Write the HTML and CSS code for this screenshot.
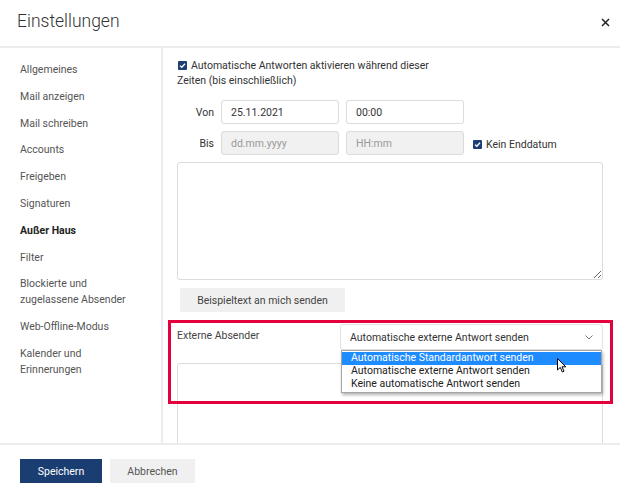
FILE: index.html
```html
<!DOCTYPE html>
<html lang="de">
<head>
<meta charset="utf-8">
<title>Einstellungen</title>
<link rel="stylesheet" href="styles.css">
</head>
<body>
<div class="dialog">
  <header class="header">
    <h1 class="title">Einstellungen</h1>
    <button class="close" aria-label="Schließen">
      <svg width="9" height="9" viewBox="0 0 9 9"><path d="M1 1 L8 8 M8 1 L1 8" stroke="#222" stroke-width="1.5" fill="none"/></svg>
    </button>
  </header>
  <div class="main">
    <nav class="sidebar">
      <div class="nav-item">Allgemeines</div>
      <div class="nav-item">Mail anzeigen</div>
      <div class="nav-item">Mail schreiben</div>
      <div class="nav-item">Accounts</div>
      <div class="nav-item">Freigeben</div>
      <div class="nav-item">Signaturen</div>
      <div class="nav-item active">Außer Haus</div>
      <div class="nav-item">Filter</div>
      <div class="nav-item">Blockierte und<br>zugelassene Absender</div>
      <div class="nav-item">Web-Offline-Modus</div>
      <div class="nav-item">Kalender und<br>Erinnerungen</div>
    </nav>
    <section class="content">
      <p class="autoreply"><span class="check"><svg width="9" height="9" viewBox="0 0 9 9"><path d="M2 4.6 L3.8 6.3 L7 2.8" stroke="#fff" stroke-width="1.3" fill="none"/></svg></span>Automatische Antworten aktivieren während dieser Zeiten (bis einschließlich)</p>
      <div class="daterow">
        <span class="datelabel">Von</span>
        <div class="field">25.11.2021</div>
        <div class="field">00:00</div>
      </div>
      <div class="daterow second">
        <span class="datelabel">Bis</span>
        <div class="field disabled">dd.mm.yyyy</div>
        <div class="field disabled">HH:mm</div>
        <span class="enddate"><span class="check"><svg width="9" height="9" viewBox="0 0 9 9"><path d="M2 4.6 L3.8 6.3 L7 2.8" stroke="#fff" stroke-width="1.3" fill="none"/></svg></span>Kein Enddatum</span>
      </div>
      <textarea class="message"></textarea>
      <button class="sample">Beispieltext an mich senden</button>
      <div class="external">
        <span class="ext-label">Externe Absender</span>
        <div class="select">
          <span>Automatische externe Antwort senden</span>
          <svg class="chevron" width="8" height="5" viewBox="0 0 8 5"><path d="M0.5 0.5 L4 4 L7.5 0.5" stroke="#777" stroke-width="1" fill="none"/></svg>
          <ul class="options">
            <li class="option selected">Automatische Standardantwort senden</li>
            <li class="option">Automatische externe Antwort senden</li>
            <li class="option">Keine automatische Antwort senden</li>
          </ul>
          <svg class="cursor" width="10" height="15" viewBox="0 0 10 15"><path d="M0.5 0.5 L0.5 12 L3.3 9.4 L5.3 14 L7 13.2 L5 8.8 L8.8 8.8 Z" fill="#fff" stroke="#000" stroke-width="1"/></svg>
        </div>
      </div>
      <textarea class="message external-message"></textarea>
      <div class="highlight"></div>
    </section>
  </div>
  <footer class="footer">
    <button class="btn primary">Speichern</button>
    <button class="btn secondary">Abbrechen</button>
  </footer>
</div>
</body>
</html>
```
FILE: styles.css
```css
* { box-sizing: border-box; }
html, body { margin: 0; padding: 0; }
body {
  font-family: Roboto, "Noto Sans", "Liberation Sans", sans-serif;
  font-size: 10.5px;
  color: #333;
  background: #fff;
  overflow: hidden;
}
.dialog {
  width: 620px;
  height: 493px;
  display: flex;
  flex-direction: column;
}
.header {
  height: 48px;
  flex: none;
  border-bottom: 2px solid #ececec;
  display: flex;
  align-items: center;
  justify-content: space-between;
  padding: 0 9px 4px 17px;
}
.title {
  margin: 0;
  font-size: 17.5px;
  font-weight: 300;
  color: #333;
}
.close {
  border: 0;
  background: none;
  padding: 0;
  width: 12px;
  height: 12px;
  display: flex;
  align-items: center;
  justify-content: center;
  margin-top: 3px;
}
.main {
  flex: none;
  height: 397px;
  display: flex;
  border-bottom: 2px solid #ececec;
}
.sidebar {
  width: 163px;
  flex: none;
  border-right: 2px solid #ececec;
  padding: 14px 0 0 20px;
}
.nav-item {
  line-height: 16px;
  margin-bottom: 10.8px;
  color: #555;
}
.nav-item.active {
  color: #222;
  font-weight: 700;
}
.content {
  flex: 1;
  position: relative;
  overflow: hidden;
  padding: 10px 17px 0 14px;
}
.autoreply {
  margin: 0;
  max-width: 275px;
  line-height: 15px;
  color: #333;
}
.check {
  display: inline-block;
  width: 9px;
  height: 9px;
  background: #1c3f74;
  border-radius: 1px;
  vertical-align: -1px;
  margin: 0 4px 0 1px;
}
.check svg { display: block; }
.daterow {
  display: flex;
  align-items: center;
  gap: 7px;
  margin-top: 12px;
}
.daterow.second { margin-top: 7px; }
.datelabel {
  width: 37px;
  text-align: right;
  color: #333;
}
.field {
  width: 118px;
  height: 24px;
  border: 1px solid #dcdcdc;
  border-radius: 3px;
  padding: 0 9px;
  display: flex;
  align-items: center;
  color: #333;
}
.field.disabled {
  background: #f1f1f1;
  color: #999;
}
.enddate {
  margin-left: 1px;
  margin-top: 3px;
  color: #333;
}
.message {
  display: block;
  width: 100%;
  height: 118px;
  margin: 7px 0 0;
  border: 1px solid #dcdcdc;
  border-radius: 3px;
  font: inherit;
  resize: both;
  background: #fff;
}
.sample {
  display: block;
  margin: 8px 0 0 3px;
  width: 165px;
  height: 24px;
  border: 0;
  background: #f0f0f0;
  color: #444;
  font: inherit;
}
.external {
  display: flex;
  margin-top: 12px;
}
.ext-label {
  width: 163px;
  flex: none;
  line-height: 24px;
  color: #444;
}
.select {
  flex: 1;
  height: 26px;
  position: relative;
  border: 1px solid #e2e2e2;
  border-radius: 3px;
  display: flex;
  align-items: center;
  justify-content: space-between;
  padding: 0 9px 0 9px;
  color: #333;
}
.chevron { margin-top: 1px; }
.options {
  position: absolute;
  top: 25px;
  left: 0;
  right: 0;
  margin: 0;
  padding: 1px 0 2px;
  list-style: none;
  background: #fff;
  border: 1px solid #a5a5a5;
  box-shadow: 1px 2px 3px rgba(0,0,0,0.3);
  z-index: 2;
}
.option {
  height: 12.8px;
  line-height: 12.8px;
  padding-left: 9px;
  color: #222;
}
.option.selected {
  background: #1e8cff;
  color: #fff;
}
.cursor {
  position: absolute;
  left: 216px;
  top: 33px;
  z-index: 3;
}
.external-message {
  margin-top: 13px;
  height: 100px;
}
.highlight {
  position: absolute;
  left: 5px;
  top: 272px;
  width: 445px;
  height: 84px;
  border: 3px solid #e4003c;
  pointer-events: none;
  z-index: 1;
}
.footer {
  flex: 1;
  padding: 14px 20px 0;
  display: flex;
  align-items: flex-start;
  gap: 8px;
}
.btn {
  height: 24px;
  border: 0;
  font: inherit;
  padding: 0;
}
.btn.primary {
  width: 82px;
  background: #1b3e72;
  color: #fff;
}
.btn.secondary {
  width: 85px;
  background: #f0f0f0;
  color: #555;
}
```
